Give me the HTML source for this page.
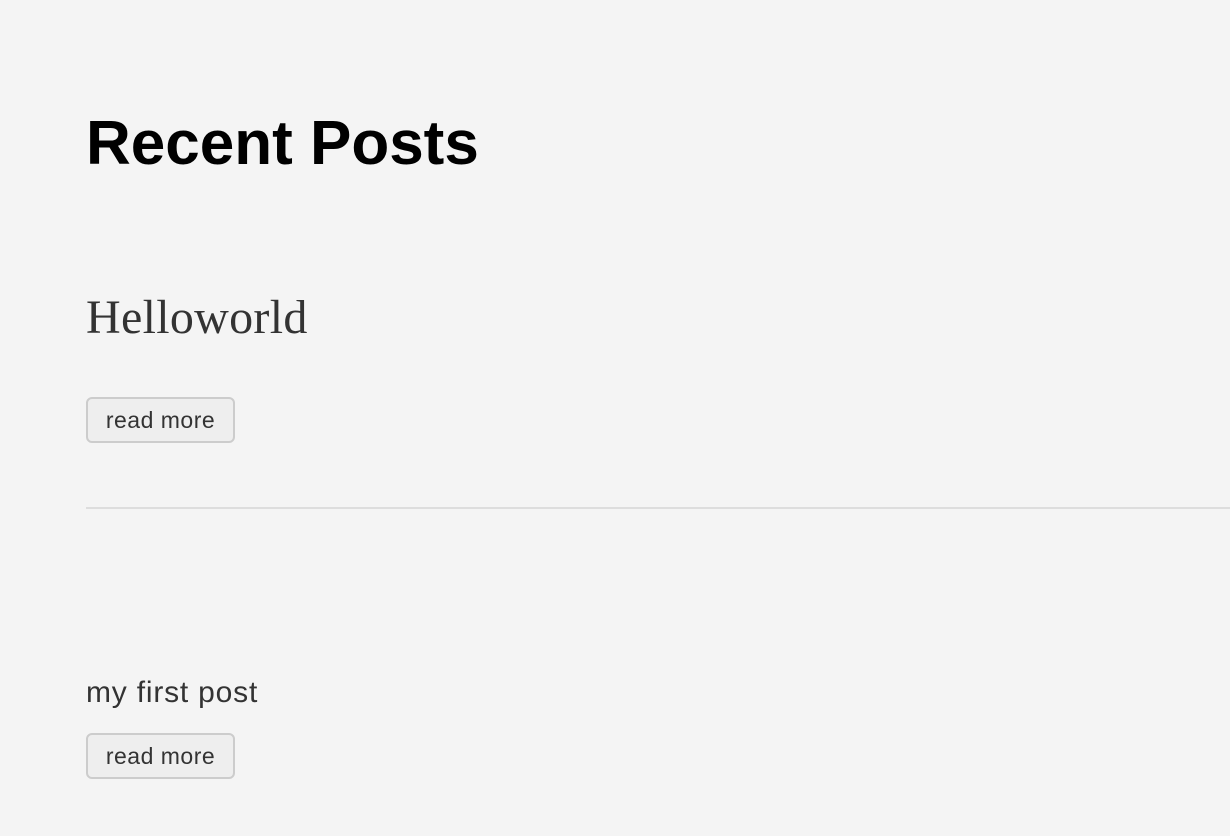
<!DOCTYPE html>
<html><head><style>
body{margin:0;background:#f4f4f4;width:1230px;height:836px;overflow:hidden;font-family:"Liberation Sans",sans-serif;color:#333;}
h1{position:absolute;left:86px;top:108px;margin:0;font-size:62px;font-weight:bold;color:#000;letter-spacing:0px;line-height:72px;}
.t{position:absolute;left:86px;top:290px;font-family:"Liberation Serif",serif;font-size:48px;line-height:56px;color:#333;letter-spacing:0.3px;}
.b{position:absolute;left:86px;width:149px;height:46px;box-sizing:border-box;border:2px solid #ccc;border-radius:6px;background:#eee;font-size:23px;line-height:42px;text-align:center;color:#333;letter-spacing:0.5px;}
.hr{position:absolute;left:86px;right:0;top:507px;height:2px;background:#ddd;}
.p{position:absolute;left:86px;top:674px;font-size:30px;line-height:38px;color:#333;letter-spacing:0.8px;}
</style></head><body>
<h1>Recent Posts</h1>
<div class="t">Helloworld</div>
<div class="b" style="top:397px">read more</div>
<div class="hr"></div>
<div class="p">my first post</div>
<div class="b" style="top:733px">read more</div>
</body></html>
